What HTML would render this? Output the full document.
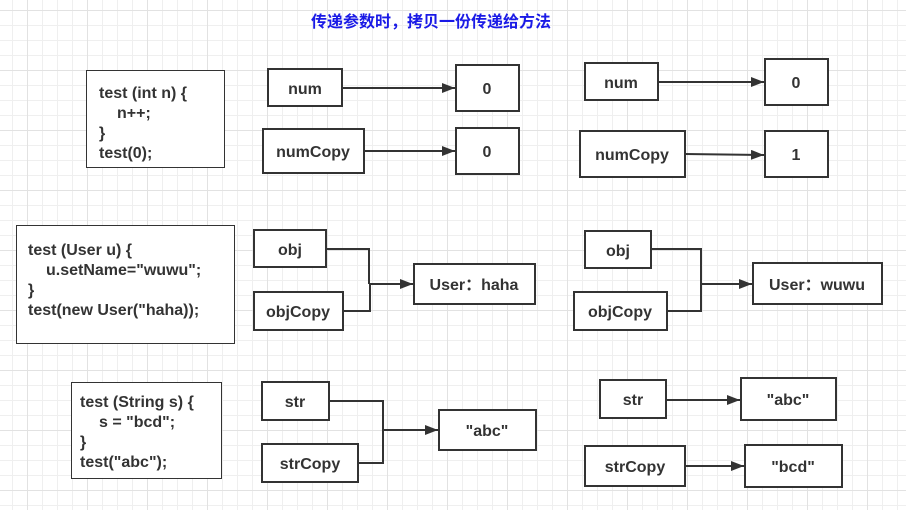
<!DOCTYPE html>
<html><head><meta charset="utf-8"><style>
html,body{margin:0;padding:0;background:#fff;}
svg{display:block}
text{font-family:"Liberation Sans","Noto Sans CJK SC",sans-serif;font-weight:bold;fill:#333;}
</style></head><body>
<svg width="906" height="510" viewBox="0 0 906 510" xmlns="http://www.w3.org/2000/svg">
<defs>
<pattern id="mi" x="12" y="10" width="15" height="15" patternUnits="userSpaceOnUse">
<path d="M0.5 0V15M0 0.5H15" stroke="#efefef" stroke-width="1" fill="none"/>
</pattern>
<pattern id="ma" x="27" y="10" width="60" height="60" patternUnits="userSpaceOnUse">
<path d="M0.5 0V60M0 0.5H60" stroke="#e2e2e2" stroke-width="1" fill="none"/>
</pattern>
<marker id="ar" viewBox="0 0 13 10" refX="13" refY="5" markerWidth="13" markerHeight="10" markerUnits="userSpaceOnUse" orient="auto">
<path d="M0 0L13 5L0 10Z" fill="#333"/>
</marker>
</defs>
<rect width="906" height="510" fill="url(#mi)"/>
<rect width="906" height="510" fill="url(#ma)"/>

<text x="431" y="27" text-anchor="middle" style="fill:#1a1ae6;font-size:16px;font-weight:bold">传递参数时，拷贝一份传递给方法</text>

<g fill="#fff" stroke="#333" stroke-width="1">
<rect x="86.5" y="70.5" width="138" height="97"/>
<rect x="16.5" y="225.5" width="218" height="118"/>
<rect x="71.5" y="382.5" width="150" height="96"/>
</g>
<g style="font-size:16px">
<text x="99" y="98">test (int n) {</text>
<text x="117" y="118">n++;</text>
<text x="99" y="138">}</text>
<text x="99" y="158">test(0);</text>
<text x="28" y="255">test (User u) {</text>
<text x="46" y="275">u.setName="wuwu";</text>
<text x="28" y="295">}</text>
<text x="28" y="315">test(new User("haha));</text>
<text x="80" y="407">test (String s) {</text>
<text x="99" y="427">s = "bcd";</text>
<text x="80" y="447">}</text>
<text x="80" y="467">test("abc");</text>
</g>

<g fill="#fff" stroke="#333" stroke-width="2">
<rect x="268" y="69" width="74" height="37"/>
<rect x="456" y="65" width="63" height="46"/>
<rect x="263" y="129" width="101" height="44"/>
<rect x="456" y="128" width="63" height="46"/>
<rect x="585" y="63" width="73" height="37"/>
<rect x="765" y="59" width="63" height="46"/>
<rect x="580" y="131" width="105" height="46"/>
<rect x="765" y="131" width="63" height="46"/>

<rect x="254" y="230" width="72" height="37"/>
<rect x="254" y="292" width="89" height="38"/>
<rect x="414" y="264" width="121" height="40"/>
<rect x="585" y="231" width="66" height="37"/>
<rect x="574" y="292" width="93" height="38"/>
<rect x="753" y="263" width="129" height="41"/>

<rect x="262" y="382" width="67" height="38"/>
<rect x="262" y="444" width="96" height="38"/>
<rect x="439" y="410" width="97" height="40"/>
<rect x="600" y="380" width="66" height="38"/>
<rect x="741" y="378" width="95" height="42"/>
<rect x="585" y="446" width="100" height="40"/>
<rect x="745" y="445" width="97" height="42"/>
</g>

<g stroke="#333" stroke-width="2" fill="none">
<path d="M342 88H455" marker-end="url(#ar)"/>
<path d="M364 151H455" marker-end="url(#ar)"/>
<path d="M658 82H764" marker-end="url(#ar)"/>
<path d="M685 154L764 155" marker-end="url(#ar)"/>
<path d="M326 249H369V284M343 311H370V284"/>
<path d="M369 284H413" marker-end="url(#ar)"/>
<path d="M651 249H701V284M667 311H701V284"/>
<path d="M701 284H752" marker-end="url(#ar)"/>
<path d="M329 401H383V430M358 463H383V430"/>
<path d="M383 430H438" marker-end="url(#ar)"/>
<path d="M666 400L740 400" marker-end="url(#ar)"/>
<path d="M685 466H744" marker-end="url(#ar)"/>
</g>

<g style="font-size:16px" text-anchor="middle">
<text x="305" y="94">num</text>
<text x="487" y="94">0</text>
<text x="313" y="157">numCopy</text>
<text x="487" y="157">0</text>
<text x="621" y="88">num</text>
<text x="796" y="88">0</text>
<text x="632" y="160">numCopy</text>
<text x="796" y="160">1</text>
<text x="290" y="255">obj</text>
<text x="298" y="317">objCopy</text>
<text x="474" y="290">User：haha</text>
<text x="618" y="256">obj</text>
<text x="620" y="317">objCopy</text>
<text x="817" y="290">User：wuwu</text>
<text x="295" y="407">str</text>
<text x="310" y="469">strCopy</text>
<text x="487" y="436">"abc"</text>
<text x="633" y="405">str</text>
<text x="788" y="405">"abc"</text>
<text x="635" y="472">strCopy</text>
<text x="793" y="472">"bcd"</text>
</g>
</svg>
</body></html>
